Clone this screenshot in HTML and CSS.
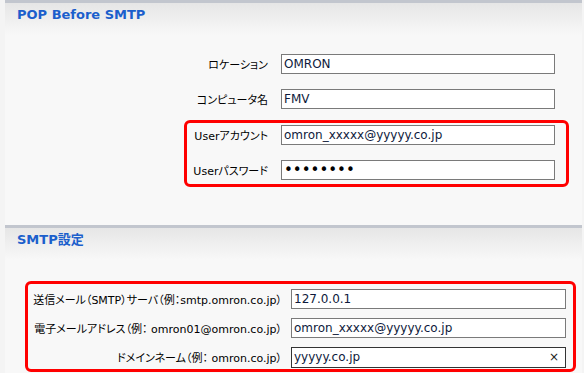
FILE: index.html
```html
<!DOCTYPE html>
<html lang="ja">
<head>
  <meta charset="UTF-8">
  <title>POP Before SMTP / SMTP設定</title>
  <link rel="stylesheet" href="styles.css">
</head>
<body>
  <div class="panel">
    <div class="panel-head">POP Before SMTP</div>
    <div class="form pop">
      <div class="row">
        <label>ロケーション</label>
        <input type="text" value="OMRON">
      </div>
      <div class="row">
        <label>コンピュータ名</label>
        <input type="text" value="FMV">
      </div>
      <div class="hl">
        <div class="row">
          <label>Userアカウント</label>
          <input type="text" value="omron_xxxxx@yyyyy.co.jp">
        </div>
        <div class="row">
          <label>Userパスワード</label>
          <input type="password" class="pass" value="abcdefgh">
        </div>
      </div>
    </div>
  </div>

  <div class="panel second">
    <div class="panel-head">SMTP設定</div>
    <div class="form smtp">
      <div class="hl">
        <div class="row">
          <label>送信メール（SMTP）サーバ（例：smtp.omron.co.jp）</label>
          <input type="text" value="127.0.0.1">
        </div>
        <div class="row">
          <label>電子メールアドレス（例： omron01@omron.co.jp）</label>
          <input type="text" value="omron_xxxxx@yyyyy.co.jp">
        </div>
        <div class="row">
          <label>ドメインネーム（例： omron.co.jp）</label>
          <div class="field focus">
            <input type="text" value="yyyyy.co.jp">
            <span class="clear">×</span>
          </div>
        </div>
      </div>
    </div>
  </div>
</body>
</html>
```

FILE: styles.css
```css
body {
  margin: 0;
  background-color: #f4f4f4;
  font-family: "DejaVu Sans", "Noto Sans CJK JP", sans-serif;
  font-size: 11px;
  color: #000000;
}

.panel {
  margin: 0 2px 0 5px;
  border-top: 3px solid #c2c6ce;
  background-color: #f8f8f8;
}

.panel-head {
  height: 32px;
  padding-left: 12px;
  box-sizing: border-box;
  background: linear-gradient(#e6e6e6, #f8f8f8);
  color: #1b5fcc;
  font-family: "DejaVu Sans", "Noto Sans CJK JP", sans-serif;
  font-weight: bold;
  font-size: 13px;
  line-height: 24px;
}

.form {
  display: flex;
  flex-direction: column;
  gap: 15px;
}

.form.pop {
  padding: 19px 0 38px;
}

.row {
  display: flex;
  align-items: center;
  height: 20px;
}

.row label {
  font-feature-settings: "palt";
  text-align: right;
  white-space: nowrap;
}

.pop .row label {
  width: 263px;
  padding-right: 13px;
}

.pop .hl .row label {
  width: 81px;
}

.hl {
  display: flex;
  flex-direction: column;
  border: 3px solid #ff0000;
  border-radius: 6px;
  background-color: #f8f8f8;
}

.pop .hl {
  margin: -4px 13px 0 179px;
  padding: 2px 0 4px;
  gap: 15px;
}

input, .field {
  box-sizing: border-box;
  height: 20px;
  border: 1px solid #7a7a7a;
  background-color: #ffffff;
  font-family: "DejaVu Sans", sans-serif;
  font-size: 12px;
  color: #0e1a3c;
  padding: 0 2px;
  margin: 0;
  outline: none;
}

.pop input {
  width: 274px;
}

.pass {
  font-size: 15px;
  color: #000000;
}

.form.smtp {
  padding: 21px 0 3px;
}

.smtp .hl {
  margin: 0 6px 0 20px;
  padding: 5px 0 2px;
  gap: 9px;
}

.smtp .row label {
  width: 254px;
  padding-right: 9px;
}

.smtp input {
  width: 275px;
}

.field {
  display: flex;
  align-items: center;
  width: 275px;
  height: 21px;
  padding: 0;
}

.field.focus {
  border-color: #333333;
}

.field input {
  border: none;
  height: 18px;
  width: 255px;
  background: transparent;
}

.clear {
  width: 14px;
  text-align: center;
  font-size: 12px;
  color: #222222;
}
```
